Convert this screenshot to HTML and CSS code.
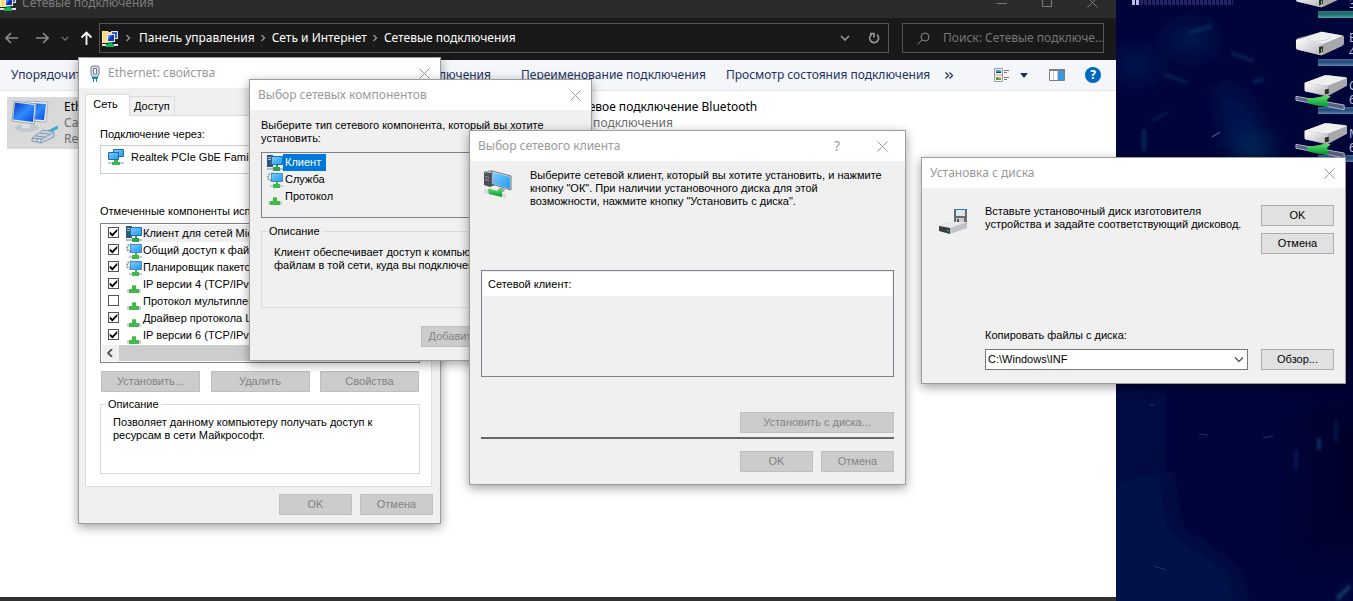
FILE: index.html
```html
<!DOCTYPE html>
<html lang="ru">
<head>
<meta charset="utf-8">
<title>Сетевые подключения</title>
<link rel="stylesheet" href="styles.css">
</head>
<body>
<svg class="defs" aria-hidden="true">
  <defs>
    <linearGradient id="screen" x1="0" y1="0" x2="1" y2="1"><stop offset="0" stop-color="#7ccbff"/><stop offset="1" stop-color="#1e9af0"/></linearGradient>
    <linearGradient id="deep" x1="0" y1="0" x2="1" y2="1"><stop offset="0" stop-color="#0a2fc0"/><stop offset=".5" stop-color="#2f8cff"/><stop offset="1" stop-color="#0648d8"/></linearGradient>
    <linearGradient id="metal" x1="0" y1="0" x2="1" y2="1"><stop offset="0" stop-color="#fff"/><stop offset="1" stop-color="#b4b4b8"/></linearGradient>
    <linearGradient id="green" x1="0" y1="0" x2="0" y2="1"><stop offset="0" stop-color="#5fe070"/><stop offset="1" stop-color="#069432"/></linearGradient>
    <symbol id="i-close" viewBox="0 0 11 11"><path d="M.5.5l10 10M10.5.5l-10 10" fill="none" stroke="currentColor"/></symbol>
    <symbol id="i-right" viewBox="0 0 6 8"><path d="M1.5 1l3 3-3 3" fill="none" stroke="currentColor" stroke-width="1.3"/></symbol>
    <symbol id="i-down" viewBox="0 0 10 6"><path d="M1 1l4 4 4-4" fill="none" stroke="currentColor" stroke-width="1.6"/></symbol>
    <symbol id="i-chevron" viewBox="0 0 10 6"><path d="M1 .5l4 4 4-4" fill="none" stroke="currentColor" stroke-width="1.100"/></symbol>
    <symbol id="i-folder" viewBox="0 0 16 17">
      <path d="M0 1h6l1 1h3v11H0z" fill="#f6dc85"/><path d="M0 1h1v12H0z" fill="#fff0b8"/>
      <path d="M9 1h7v8H9z" fill="#d9e1ee"/><path d="M10 2h5v6h-5z" fill="#3858d0"/>
      <path d="M5 4h8v8H5z" fill="#e8eef8"/><path d="M6 5h6v6H6z" fill="#1531b5"/><path d="M6 5h4l-4 5z" fill="#4f82ec"/>
      <path d="M6.500 12h4v2h-4z" fill="#18a860"/><path d="M0 14h16v2H0z" fill="#dde5e5"/><path d="M4 14h8v3H4z" fill="#16b45f"/>
    </symbol>
    <symbol id="i-plug" viewBox="0 0 16 17">
      <path d="M5.500 1h5q1.500 0 1.500 2v6.500L10.500 12h-5L4 9.500V3q0-2 1.500-2z" fill="#d5dae2" stroke="#74808f"/>
      <path d="M6.500 3.500h3V9h-3z" fill="#f5f7fa" stroke="#74808f"/><path d="M5 12h6v2h-1v3H9v-3H7v3H6v-3H5z" fill="#158bbd"/>
    </symbol>
    <symbol id="i-adapter" viewBox="0 0 16 16">
      <path d="M5.500.5h10v7h-10z" fill="url(#screen)" stroke="#226baa"/>
      <path d="M.5 3.500h10v7H.5z" fill="url(#screen)" stroke="#226baa"/>
      <path d="M0 13h16v2H0z" fill="#c9cdd0"/><path d="M6 11h4v2h2v3H4v-3h2z" fill="#3bb747"/>
    </symbol>
    <symbol id="i-client" viewBox="0 0 16 16">
      <path d="M0 0h6v12H0z" fill="#31547b"/><path d="M1 2h3v1H1zm0 2h3v1H1z" fill="#a5c4de"/>
      <path d="M4.500 1.500h11v8h-11z" fill="url(#screen)" stroke="#1f6ca8"/>
      <path d="M0 13h16v2H0z" fill="#a9bfcc"/><path d="M9 10h2v2h2v4H6v-4h3z" fill="#329d55"/>
    </symbol>
    <symbol id="i-service" viewBox="0 0 16 16">
      <circle cx="4.500" cy="5" r="3.500" fill="#edf0f2" stroke="#8a99a5" stroke-width="2" stroke-dasharray="1.600 1"/>
      <path d="M4.500 1.500h11v8h-11z" fill="url(#screen)" stroke="#458abb"/>
      <path d="M3 13h13v2H3z" fill="#c6cdd0"/><path d="M9 10h2v2h2v4H6v-4h3z" fill="#40b94b"/>
    </symbol>
    <symbol id="i-protocol" viewBox="0 0 16 16"><path d="M1 12.500h14v3H1z" fill="#c4c9c6"/><path d="M6 8h4v4h3v4H3v-4h3z" fill="#43b84a"/><path d="M6 8h4v1H6z" fill="#79d27b"/></symbol>
    <symbol id="i-pc" viewBox="0 0 30 30">
      <path d="M1 3l7-2 4 2v13l-5 2-6-2z" fill="#4b5055"/><path d="M1 3l7-2 4 2-5 1z" fill="#b4babd"/><path d="M2 7l4 1v1L2 8zm0 3l4 1v1l-4-1z" fill="#9aa2a6"/><path d="M2 4h1v1H2z" fill="#4be34d"/>
      <path d="M9 2l19 5v14L9 15z" fill="#e7eaec" stroke="#6d7479"/><path d="M10 3.500l17 4.300V20l-17-5.500z" fill="url(#screen)"/>
      <path d="M17 18l5 2-1 3-6-1z" fill="#9ea7ac"/><path d="M1 20l22 5v4L1 24z" fill="#d6dbdc"/><path d="M5 21q1-3 3-1l6 2 1-2 4 1v7l-13-3z" fill="url(#green)"/>
    </symbol>
    <symbol id="i-floppy" viewBox="0 0 30 27">
      <path d="M16 1h13v15H16z" fill="#666b70"/><path d="M18 1h9v7h-9z" fill="#dfe4e8"/><path d="M16 1h13v1H16z" fill="#2c79b9"/><path d="M18 10h8v6h-8z" fill="#c9cdd0"/><path d="M19 11h2v4h-2z" fill="#555b60"/>
      <path d="M1 18l10-4h18v6l-17 6-11-4z" fill="#bfc2c6"/><path d="M1 18l10-4h18l-17 6z" fill="#e6e8ea"/><path d="M1 18l11 2v6L1 23z" fill="#393d40"/><path d="M9 22l2 .5v1L9 23z" fill="#2dd24b"/>
    </symbol>
    <symbol id="i-ethernet" viewBox="0 0 48 48">
      <path d="M16 4l22 1-2 20-20-1z" fill="#e9ecf0" stroke="#aab2bc"/><path d="M18 6l18 1-2 16-16-1z" fill="url(#deep)"/>
      <ellipse cx="17" cy="31" rx="12" ry="4" fill="#c3c9d0"/><path d="M12 25h8v6h-8z" fill="#dce0e4"/>
      <path d="M4 4l22 3-2 20-22-3z" fill="#edf0f4" stroke="#9ba5b0"/><path d="M5 5.500l19.500 2.500-1.500 17L3 22.500z" fill="url(#deep)"/>
      <path d="M38 35l10-5" stroke="#39a8d7" stroke-width="3"/><path d="M22 41l11-8 11 2v5l-13 6-9-2z" fill="#c9d5e2" stroke="#8799ad"/><path d="M22 41l10 1 12-7M31 42v4M26 39l9 1M30 36l9 1M27 42v3" fill="none" stroke="#8194a8"/>
    </symbol>
    <symbol id="i-drive" viewBox="0 0 52 28">
      <path d="M1 11Q1 9 3 8L25 2q2-1 4-.500L49 5q2 .5 2 2v6q0 2-2 3L30 25q-2 1-4 .5L3 20q-2-.5-2-3z" fill="#a9a9ad"/>
      <path d="M2 10L25 2q2-1 4-.500L50 5.500 29 14z" fill="#efefef"/><path d="M14 8q1 4 11 3 12-1 12-6" fill="none" stroke="#cfcfd2"/>
      <path d="M1 11q0-2 2-2l24 4q2 1 2 3v9q-1 1-3 .5L3 20q-2-.5-2-3z" fill="url(#metal)"/><path d="M25 17l4-1v6l-4 2z" fill="#252a22"/><path d="M27 19h1v3h-1z" fill="#73e84c"/>
    </symbol>
    <symbol id="i-netdrive" viewBox="0 0 56 38">
      <path d="M10 9L31 1h3l19 2q1 1 1 2v7L35 22q-2 1-4 .5L11 18q-1 0-1-2z" fill="#a9a9ad"/><path d="M10 9L31 1h3l20 3-20 8z" fill="#efefef"/><path d="M10 9l22 3q2 0 2 2v8l-23-4q-1 0-1-2z" fill="url(#metal)"/><path d="M31 16l4-1v5l-4 1z" fill="#252a22"/>
      <path d="M1 23l50 9v5L1 27z" fill="#56627f" stroke="#b3bbcb"/><path d="M13 25q7 0 11-1l8-2 5 1-4 4 1 1v6q-12-1-21-4z" fill="url(#green)"/>
    </symbol>
  </defs>
</svg>

<main class="desktop">
  <svg class="wallpaper" viewBox="0 0 237 601" preserveAspectRatio="none" aria-hidden="true">
    <defs>
      <filter id="haze" filterUnits="userSpaceOnUse" x="-60" y="-60" width="360" height="720"><feGaussianBlur stdDeviation="12"/></filter>
      <filter id="soft" filterUnits="userSpaceOnUse" x="-10" y="-10" width="260" height="620"><feGaussianBlur stdDeviation="1.500"/></filter>
    </defs>
    <rect width="237" height="601" fill="#000539"/>
    <g filter="url(#haze)" opacity=".8">
      <path d="M100 80l30 20 25 60h-40z" fill="#031c5c"/><ellipse cx="75" cy="40" rx="24" ry="14" fill="#02205a"/><ellipse cx="20" cy="65" rx="24" ry="14" fill="#021b5a"/>
      <path d="M-20 480l70-10 10 60 60 40 10 61H-20z" fill="#01134c"/><path d="M-20 390h70v80h-70z" fill="#000b46"/><path d="M190 400h77v150h-77z" fill="#00022c"/><path d="M225 170h40v210h-40z" fill="#00022c"/><ellipse cx="140" cy="150" rx="13" ry="14" fill="#06406a"/>
    </g>
    <g filter="url(#soft)" stroke-width="4" fill="none" opacity=".4">
      <path d="M72 33l24-7" stroke="#0d496f"/><path d="M48 74l23 9" stroke="#104c69"/><path d="M115 53l22 8" stroke="#0b4372"/><path d="M28 130v20" stroke="#0a5b78"/><path d="M137 82l11-3" stroke="#104b82"/><path d="M35 121l18-9" stroke="#0c2a55"/><path d="M203 438v12" stroke="#1476b4"/><path d="M180 450v20" stroke="#0b347c"/><path d="M220 420v22" stroke="#0a2d75"/><path d="M221 599l13-13" stroke="#2888b0"/>
    </g>
    <path d="M38 566l12 4M147 438l10-2M83 434l9 1M33 405h6" stroke="#1d3560"/><path d="M96 137l8-5" stroke="#63728e"/>
    <path d="M17.500 0v5M21.500 0v5" stroke="#bdb9ef" stroke-width="3"/><path d="M24 2.500h93" stroke="#252565" stroke-width="5" stroke-dasharray="3 1"/>
  </svg>

  <ul class="drives">
    <li><svg><use href="#i-drive"/></svg><span><br>3</span><i class="teal"></i></li>
    <li><svg><use href="#i-drive"/></svg><span>B<br>4</span><i></i></li>
    <li><svg class="net"><use href="#i-netdrive"/></svg><span>C<br>6</span><i></i></li>
    <li><svg class="net"><use href="#i-netdrive"/></svg><span>M<br>6</span><i></i></li>
  </ul>

  <section class="explorer">
    <header class="ex-title">
      <svg class="folder"><use href="#i-folder"/></svg><h1>Сетевые подключения</h1>
      <div class="caption">
        <button aria-label="Свернуть"><svg viewBox="0 0 11 11"><path d="M0 6.500h10" stroke="currentColor"/></svg></button>
        <button aria-label="Развернуть"><svg viewBox="0 0 11 11"><path d="M.5.5h9v9h-9z" fill="none" stroke="currentColor"/></svg></button>
        <button aria-label="Закрыть"><svg><use href="#i-close"/></svg></button>
      </div>
    </header>
    <nav class="ex-nav">
      <button aria-label="Назад"><svg viewBox="0 0 14 12"><path d="M13 6H1M6 1L1 6l5 5" fill="none" stroke="#8b8b8b" stroke-width="1.600"/></svg></button>
      <button aria-label="Вперёд"><svg viewBox="0 0 14 12"><path d="M1 6h12M8 1l5 5-5 5" fill="none" stroke="#8b8b8b" stroke-width="1.600"/></svg></button>
      <button class="recent" aria-label="Последние"><svg><use href="#i-down"/></svg></button>
      <button class="up" aria-label="Вверх"><svg viewBox="0 0 12 14"><path d="M6 14V1M1 6.500l5-5 5 5" fill="none" stroke="#fff" stroke-width="1.800"/></svg></button>
      <div class="address">
        <svg class="folder"><use href="#i-folder"/></svg>
        <svg class="sep"><use href="#i-right"/></svg><a href="#">Панель управления</a>
        <svg class="sep"><use href="#i-right"/></svg><a href="#">Сеть и Интернет</a>
        <svg class="sep"><use href="#i-right"/></svg><a href="#">Сетевые подключения</a>
        <button class="history" aria-label="Журнал"><svg><use href="#i-down"/></svg></button>
        <button class="refresh" aria-label="Обновить"><svg viewBox="0 0 12 12"><path d="M9 2.700A4.500 4.500 0 1 1 4 2.200M2 1.500h4V5.500" fill="none" stroke="#999" stroke-width="1.600"/></svg></button>
      </div>
      <label class="search"><svg viewBox="0 0 13 13"><circle cx="8" cy="5" r="4" fill="none" stroke="#888"/><path d="M5 8l-4.500 4.500" stroke="#888"/></svg><input type="text" aria-label="Поиск" placeholder="Поиск: Сетевые подключе..."></label>
    </nav>
    <div class="toolbar">
      <button class="organize">Упорядочить</button>
      <button class="diagnose">Диагностика подключения</button>
      <button>Переименование подключения</button>
      <button>Просмотр состояния подключения</button>
      <button class="more" aria-label="Ещё"><svg viewBox="0 0 8 7"><path d="M.5.5l3 3-3 3M4.500.5l3 3-3 3" fill="none" stroke="#1b335e" stroke-width="1.300"/></svg></button>
      <div class="views">
        <button aria-label="Вид"><svg class="view" viewBox="0 0 16 15"><path d="M.5.5h8v13h-8zM.5 7h8" fill="#fff" stroke="#999"/><path d="M2 2h5v3H2z" fill="#3b97d3"/><path d="M2 4h5v1H2z" fill="#173b76"/><path d="M2 9h5v3H2z" fill="#4c9c44"/><path d="M4 9h3v2H4z" fill="#e49a38"/><path d="M10 2.500h5M10 4.500h3M10 9.500h5M10 11.500h3" stroke="#777"/></svg></button>
        <button class="caret" aria-label="Другие виды"></button>
        <button class="pane" aria-label="Область просмотра"><svg viewBox="0 0 16 12"><path d="M.5.5h15v11H.5z" fill="#fff" stroke="#7b7f83"/><path d="M0 0h16v2H0z" fill="#7b7f83"/><path d="M4.500 2v9M8.500 2v9" stroke="#c7c9cb"/><path d="M9 2h6v9H9z" fill="#3a98e3"/></svg></button>
        <button class="help" aria-label="Справка">?</button>
      </div>
    </div>
    <div class="items">
      <article class="item selected"><svg><use href="#i-ethernet"/></svg><p><b>Ethernet</b><br>Сам<br>Realtek</p></article>
      <article class="item bt"><p><b>Сетевое подключение Bluetooth</b><br>Нет подключения</p></article>
    </div>
  </section>

  <section class="window w-props">
    <header><svg class="plug"><use href="#i-plug"/></svg><h2>Ethernet: свойства</h2><button class="close" aria-label="Закрыть"><svg><use href="#i-close"/></svg></button></header>
    <div class="tabs"><button class="on">Сеть</button><button>Доступ</button></div>
    <div class="panel">
      <p>Подключение через:</p>
      <div class="adapter"><svg><use href="#i-adapter"/></svg>Realtek PCIe GbE Family</div>
      <p>Отмеченные компоненты исп</p>
      <div class="components">
        <label class="hl"><input type="checkbox" checked><svg><use href="#i-client"/></svg>Клиент для сетей Mic</label>
        <label><input type="checkbox" checked><svg><use href="#i-service"/></svg>Общий доступ к файл</label>
        <label><input type="checkbox" checked><svg><use href="#i-service"/></svg>Планировщик пакето</label>
        <label><input type="checkbox" checked><svg><use href="#i-protocol"/></svg>IP версии 4 (TCP/IPv4</label>
        <label><input type="checkbox"><svg><use href="#i-protocol"/></svg>Протокол мультиплек</label>
        <label><input type="checkbox" checked><svg><use href="#i-protocol"/></svg>Драйвер протокола L</label>
        <label><input type="checkbox" checked><svg><use href="#i-protocol"/></svg>IP версии 6 (TCP/IPv6</label>
        <div class="scroll"><svg viewBox="0 0 6 8"><path d="M5 0L1 4l4 4" fill="none" stroke="#505050" stroke-width="1.800"/></svg><i></i></div>
      </div>
      <div class="triple"><button class="btn" disabled>Установить...</button><button class="btn" disabled>Удалить</button><button class="btn" disabled>Свойства</button></div>
      <fieldset><legend>Описание</legend>Позволяет данному компьютеру получать доступ к ресурсам в сети Майкрософт.</fieldset>
    </div>
    <footer><button class="btn" disabled>OK</button><button class="btn" disabled>Отмена</button></footer>
  </section>

  <section class="window w-type">
    <header><h2>Выбор сетевых компонентов</h2><button class="close" aria-label="Закрыть"><svg><use href="#i-close"/></svg></button></header>
    <div class="body">
      <p>Выберите тип сетевого компонента, который вы хотите установить:</p>
      <ul class="types">
        <li class="on"><svg><use href="#i-client"/></svg><span>Клиент</span></li>
        <li><svg><use href="#i-service"/></svg><span>Служба</span></li>
        <li><svg><use href="#i-protocol"/></svg><span>Протокол</span></li>
      </ul>
      <fieldset><legend>Описание</legend>Клиент обеспечивает доступ к компью<br>файлам в той сети, куда вы подключен</fieldset>
      <footer><button class="btn" disabled>Добавить...</button></footer>
    </div>
  </section>

  <section class="window w-client">
    <header><h2>Выбор сетевого клиента</h2><button class="close ask" aria-label="Справка">?</button><button class="close" aria-label="Закрыть"><svg><use href="#i-close"/></svg></button></header>
    <div class="body">
      <div class="intro"><svg><use href="#i-pc"/></svg><p>Выберите сетевой клиент, который вы хотите установить, и нажмите кнопку "ОК". При наличии установочного диска для этой возможности, нажмите кнопку "Установить с диска".</p></div>
      <div class="clients"><div>Сетевой клиент:</div></div>
      <button class="btn wide" disabled>Установить с диска...</button>
      <hr>
      <footer><button class="btn" disabled>OK</button><button class="btn" disabled>Отмена</button></footer>
    </div>
  </section>

  <section class="window w-disk">
    <header><h2>Установка с диска</h2><button class="close" aria-label="Закрыть"><svg><use href="#i-close"/></svg></button></header>
    <div class="body">
      <svg><use href="#i-floppy"/></svg>
      <p>Вставьте установочный диск изготовителя устройства и задайте соответствующий дисковод.</p>
      <div class="stack"><button class="btn">OK</button><button class="btn">Отмена</button></div>
      <div class="source">
        <label for="path">Копировать файлы с диска:</label>
        <div class="combo"><select id="path"><option>C:\Windows\INF</option></select><svg><use href="#i-chevron"/></svg></div>
      </div>
      <button class="btn browse">Обзор...</button>
    </div>
  </section>
</main>
</body>
</html>
```
FILE: styles.css
```css
* { box-sizing: border-box; }
body { margin: 0; font: 12px/16px "Noto Sans", "Open Sans", sans-serif; color: #000; }
h1, h2, p, ul { margin: 0; padding: 0; font: inherit; }
ul { list-style: none; }
button { border: 0; padding: 0; background: none; font: inherit; color: inherit; flex: none; display: flex; align-items: center; justify-content: center; }
svg { flex: none; display: block; }
a { color: inherit; text-decoration: none; }
.defs { position: absolute; width: 0; height: 0; }
.desktop { position: relative; height: 100vh; overflow: hidden; background: #00053a; }
.wallpaper { position: absolute; right: 0; top: 0; width: 237px; height: 100%; }

.drives { position: absolute; right: 0; top: -30px; width: 58px; color: #b9bccb; }
.drives li { height: 48px; display: flex; position: relative; z-index: 0; overflow: hidden; }
.drives svg { width: 50px; height: 28px; margin-top: 12px; }
.drives svg.net { width: 54px; height: 37px; margin-top: 8px; }
.drives span { font-size: 12px; line-height: 14px; margin: 13px 0 0 4px; }
.drives .net + span { margin-left: 0; }
.drives i { position: absolute; right: 0; bottom: 0; width: 35px; height: 7px; background: linear-gradient(#3a6698, #234878 45%, #5c85ae); z-index: -1; }
.drives i.teal { background: linear-gradient(#277a78, #1a6a6a 45%, #56a29a); }

/* Explorer */
.explorer { position: absolute; inset: 0 237px 0 0; display: flex; flex-direction: column; background: #fff; border-bottom: 4px solid #303030; }
.ex-title { height: 18px; background: #2b2b2b; color: #7b7b7b; display: flex; align-items: center; overflow: hidden; }
.ex-title .folder { margin: -14px 6px 0 0; }
.ex-title h1 { margin-top: -12px; }
.folder { width: 16px; height: 17px; }
.caption { margin: -14px 18px 0 auto; display: flex; gap: 34px; }
.caption svg { width: 11px; height: 11px; }
.ex-nav { height: 42px; background: #191919; color: #fff; display: flex; align-items: center; padding: 0 12px 2px 5px; }
.ex-nav > button { width: 14px; margin-right: 16px; }
.ex-nav > button svg { width: 14px; height: 12px; }
.ex-nav > .recent { width: 8px; margin: 0 11px 0 -4px; color: #777; }
.ex-nav > .recent svg { width: 8px; height: 5px; }
.ex-nav > .up { width: 13px; margin-right: 6px; }
.ex-nav > .up svg { width: 13px; height: 14px; }
.address, .search { height: 30px; border: 1px solid #555; display: flex; align-items: center; }
.address { flex: 1; padding-left: 2px; }
.sep { width: 6px; height: 8px; color: #999; margin: 0 6px 0 5px; }
.folder + .sep { margin: 0 8px 0 7px; }
.history { margin-left: auto; color: #999; width: 30px; }
.history svg { width: 10px; height: 6px; }
.refresh { width: 28px; }
.refresh svg { width: 12px; height: 12px; }
.search { width: 202px; margin-left: 13px; padding-left: 14px; gap: 13px; }
.search svg { width: 13px; height: 13px; }
.search input { flex: 1; min-width: 0; border: 0; padding: 0; background: none; font: inherit; color: #777; }
.search input::placeholder { color: #777; }
.toolbar { height: 31px; background: #f4f6f9; border-bottom: 1px solid #e3e6ea; color: #1b335e; display: flex; align-items: center; padding: 0 15px 0 11px; gap: 20px; }
.organize { width: 280px; justify-content: flex-start; }
.diagnose { width: 180px; justify-content: flex-end; margin-right: 10px; }
.toolbar > button { white-space: nowrap; }
.toolbar .more { margin-left: -5px; }
.more svg { width: 8px; height: 7px; }
.views { margin-left: auto; display: flex; align-items: center; }
.view { width: 16px; height: 15px; }
.caret { border: 4px solid transparent; border-top: 5px solid #1b335e; border-bottom: 0; margin: 0 21px 0 10px; }
.pane svg { width: 16px; height: 12px; }
.help { width: 16px; height: 16px; border-radius: 50%; background: #0067c0; color: #fff; font-weight: bold; margin-left: 20px; }
.items { display: flex; padding: 6px 7px; }
.item { display: flex; height: 52px; color: #6d6d6d; }
.item b { font-weight: normal; color: #000; }
.item p { padding-top: 2px; }
.item.selected { width: 250px; background: #d9d9d9; padding-left: 3px; gap: 6px; }
.item svg { width: 48px; height: 48px; }
.item.bt { margin-left: 312px; white-space: nowrap; }

/* Dialog windows */
.window { position: absolute; background: #f0f0f0; border: 1px solid #9d9d9d; box-shadow: 0 3px 10px rgba(0, 0, 0, .38); font: 11px/13px "Liberation Sans", Arial, sans-serif; }
.window > header { height: 30px; background: #fff; color: #999; display: flex; align-items: center; padding: 0 10px 0 8px; font: 12px/16px "Noto Sans", "Open Sans", sans-serif; }
.window h2 { margin-right: auto; }
.close { width: 12px; }
.close svg { width: 11px; height: 11px; }
.ask { margin-right: 33px; font-size: 14px; }
.btn { width: 73px; height: 21px; border: 1px solid #adadad; background: #e1e1e1; color: #000; white-space: nowrap; }
.btn:disabled { background: #ccc; border-color: #bfbfbf; color: #838383; }
.window footer { display: flex; justify-content: flex-end; gap: 8px; }
fieldset { margin: 0; border: 1px solid #dcdcdc; padding: 5px 12px; min-width: 0; }
legend { padding: 0 2px; margin-left: -7px; }

.w-props { left: 78px; top: 57px; width: 363px; padding-bottom: 8px; }
.plug { width: 16px; height: 17px; margin-right: 5px; }
.tabs { display: flex; align-items: flex-end; padding: 6px 6px 0; }
.tabs button { height: 19px; padding: 0 4px; border: 1px solid #dcdcdc; border-bottom: 0; border-left: 0; }
.tabs .on { height: 22px; width: 45px; background: #fff; border-left: 1px solid #dcdcdc; margin-bottom: -1px; position: relative; padding: 0 8px 2px 4px; }
.panel { margin: 0 8px 7px 6px; background: #fff; border: 1px solid #dcdcdc; padding: 12px 11px 12px 14px; white-space: nowrap; }
.adapter { height: 29px; margin: 4px 0 31px; border: 1px solid #ccc; display: flex; align-items: center; padding: 0 0 5px 7px; gap: 7px; }
.adapter svg, .components svg, .types svg { width: 16px; height: 16px; }
.components { height: 140px; margin: 5px 0 8px; border: 1px solid #7c828c; padding: 1px; }
.components label { height: 17px; display: flex; align-items: center; padding-left: 6px; }
.components label svg { margin: 0 1px 0 7px; }
.hl { background: linear-gradient(#f0f0f0, #f0f0f0) no-repeat 40px 0; }
.components input { appearance: none; width: 11px; height: 11px; margin: 0 0 2px; border: 1px solid #555; background: #fff; }
.components input:checked::after { content: ""; display: block; width: 9px; height: 9px; background: #000; clip-path: polygon(8% 38%, 38% 65%, 92% 8%, 92% 35%, 38% 95%, 8% 66%); }
.components .scroll svg { width: 6px; height: 8px; margin: 0 6px 0 5px; }
.scroll { display: flex; align-items: center; height: 16px; background: #f0f0f0; margin-top: 1px; }
.scroll i { background: #cdcdcd; height: 16px; flex: 1; }
.triple { display: flex; justify-content: space-between; padding: 0 1px; margin-bottom: 6px; }
.triple .btn { width: 99px; }
.panel fieldset { height: 76px; white-space: normal; }
.w-props footer { padding-right: 7px; }

.w-type { left: 249px; top: 79px; width: 343px; }
.w-type .body { padding: 9px 11px 13px; }
.types { height: 66px; margin: 7px 0 7px; padding: 1px 5px; border: 1px solid #7c828c; }
.types li { display: flex; height: 17px; align-items: center; }
.types span { padding: 2px 5px 2px 2px; }
.types .on span { background: #0078d7; color: #fff; }
.w-type fieldset { height: 83px; margin-bottom: 18px; white-space: nowrap; padding-top: 8px; }
.w-type footer { padding-right: 86px; }

.w-client { left: 469px; top: 130px; width: 437px; }
.w-client header { padding-right: 17px; }
.w-client .body { padding: 8px 11px 12px; display: flex; flex-direction: column; }
.intro { display: flex; gap: 17px; padding: 0 9px 0 2px; height: 101px; }
.intro svg { width: 30px; height: 30px; }
.clients { height: 107px; border: 1px solid #7c828c; padding: 1px; margin-bottom: 35px; }
.clients div { height: 24px; background: #fff; padding: 6px 5px; }
.wide { width: 154px; align-self: flex-end; }
.w-client hr { width: 100%; margin: 4px 0 12px; border: 0; height: 2px; background: #666; }

.w-disk { left: 921px; top: 157px; width: 425px; }
.w-disk .body { display: grid; grid-template-columns: 47px 1fr 73px; row-gap: 75px; padding: 17px 11px 13px 16px; }
.w-disk .body > svg { width: 30px; height: 27px; margin-top: 3px; }
.w-disk .body > p { padding-right: 16px; }
.w-disk .stack { display: grid; gap: 7px; }
.source { grid-column: 2; display: grid; gap: 7px; margin-right: 13px; }
.combo { display: grid; align-items: center; }
.combo > * { grid-area: 1 / 1; }
.combo select { appearance: none; height: 21px; border: 1px solid #777; border-radius: 0; background: #fff; padding: 0 2px; font: inherit; color: #000; }
.combo svg { justify-self: end; width: 10px; height: 6px; margin-right: 4px; color: #444; pointer-events: none; }
.browse { align-self: end; }
```
